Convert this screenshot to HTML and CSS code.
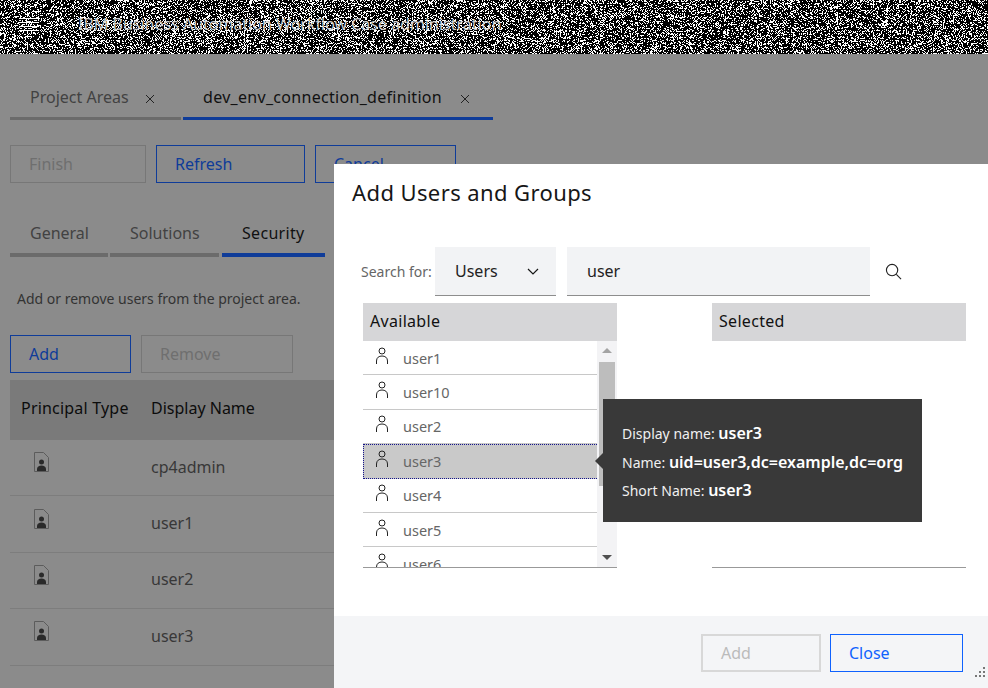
FILE: index.html
```html
<!DOCTYPE html>
<html lang="en">
<head>
    <meta charset="UTF-8">
    <meta name="viewport" content="width=device-width, initial-scale=1.0">
    <title>Add Users and Groups</title>
    <link rel="stylesheet" href="styles.css">
</head>
<body>
    <svg class="defs" width="0" height="0" aria-hidden="true">
        <defs>
            <filter id="dither" x="0" y="0" width="100%" height="100%">
                <feTurbulence type="fractalNoise" baseFrequency="2.3" numOctaves="2" seed="7"/>
                <feColorMatrix type="matrix" values="1 0 0 0 0  1 0 0 0 0  1 0 0 0 0  0 0 0 0 1"/>
                <feComponentTransfer>
                    <feFuncR type="discrete" tableValues="0 0 0 0 0 1 1 1 1"/>
                    <feFuncG type="discrete" tableValues="0 0 0 0 0 1 1 1 1"/>
                    <feFuncB type="discrete" tableValues="0 0 0 0 0 1 1 1 1"/>
                </feComponentTransfer>
            </filter>
            <symbol id="person" viewBox="0 0 14 18">
                <circle cx="7" cy="4" r="3" fill="none" stroke="currentColor"/>
                <path d="M1.500 17v-3C1.500 10.500 4 9 7 9s5.500 1.500 5.500 5v3" fill="none" stroke="currentColor"/>
            </symbol>
            <symbol id="badge" viewBox="0 0 15 20">
                <path d="M.5 19.500V.5h9l5 5v14z" fill="none" stroke="#5c5c5c"/>
                <circle cx="7.500" cy="10" r="2.500" fill="#2a2a2a"/>
                <path d="M3 19v-2c0-2 2-3.500 4.500-3.500S12 15 12 17v2z" fill="#2a2a2a"/>
            </symbol>
            <symbol id="cross" viewBox="0 0 10 10">
                <path d="M1 1l8 8M9 1l-8 8" fill="none" stroke="currentColor"/>
            </symbol>
        </defs>
    </svg>

    <div class="screen">
        <header class="masthead">
            <svg class="noise masthead-noise" aria-hidden="true"><rect width="100%" height="100%" filter="url(#dither)"/></svg>
            <span class="menu-icon"><i></i><i></i><i></i><i></i></span>
            <span class="product">IBM Business Automation Workflow Case administration</span>
        </header>

        <main class="page">
            <div class="tabs tabs-top">
                <div class="tab tab-areas">Project Areas <svg class="tab-close"><use href="#cross"/></svg></div>
                <div class="tab tab-conn is-active">dev_env_connection_definition <svg class="tab-close"><use href="#cross"/></svg></div>
            </div>

            <div class="actions actions-top">
                <button class="btn btn-finish is-disabled">Finish</button>
                <button class="btn btn-refresh">Refresh</button>
                <button class="btn btn-cancel">Cancel</button>
            </div>

            <div class="tabs tabs-sub">
                <div class="tab tab-general">General</div>
                <div class="tab tab-solutions">Solutions</div>
                <div class="tab tab-security is-active">Security</div>
            </div>

            <p class="hint">Add or remove users from the project area.</p>

            <div class="actions actions-users">
                <button class="btn btn-add">Add</button>
                <button class="btn btn-remove is-disabled">Remove</button>
            </div>

            <div class="grid-head">
                <span class="col-type">Principal Type</span>
                <span>Display Name</span>
            </div>
            <div class="grid-row"><span class="col-type"><svg class="badge"><use href="#badge"/></svg></span><span>cp4admin</span></div>
            <div class="grid-row"><span class="col-type"><svg class="badge"><use href="#badge"/></svg></span><span>user1</span></div>
            <div class="grid-row"><span class="col-type"><svg class="badge"><use href="#badge"/></svg></span><span>user2</span></div>
            <div class="grid-row"><span class="col-type"><svg class="badge"><use href="#badge"/></svg></span><span>user3</span></div>
        </main>

        <section class="dialog">
            <h2 class="dialog-title">Add Users and Groups</h2>

            <div class="dialog-body">
                <div class="search-bar">
                    <label class="search-label">Search for:</label>
                    <div class="field field-select">
                        <span>Users</span>
                        <svg class="chevron" viewBox="0 0 12 7"><path d="M1 1l5 5 5-5" fill="none" stroke="#161616" stroke-width="1.200"/></svg>
                    </div>
                    <div class="field field-input">user</div>
                    <svg class="search-icon" viewBox="0 0 18 18"><circle cx="7.500" cy="7.500" r="6" fill="none" stroke="#222" stroke-width="1.200"/><path d="M12 12l5 5" stroke="#222" stroke-width="1.200"/></svg>
                </div>

                <div class="pickers">
                    <div class="picker">
                        <div class="picker-head">Available</div>
                        <div class="picker-list">
                            <ul class="users">
                                <li><svg class="person"><use href="#person"/></svg>user1</li>
                                <li><svg class="person"><use href="#person"/></svg>user10</li>
                                <li><svg class="person"><use href="#person"/></svg>user2</li>
                                <li class="is-focused"><svg class="person"><use href="#person"/></svg>user3</li>
                                <li><svg class="person"><use href="#person"/></svg>user4</li>
                                <li><svg class="person"><use href="#person"/></svg>user5</li>
                                <li><svg class="person"><use href="#person"/></svg>user6</li>
                            </ul>
                            <div class="scrollbar">
                                <span class="arrow arrow-up"></span>
                                <span class="thumb"></span>
                                <span class="arrow arrow-down"></span>
                            </div>
                        </div>
                    </div>
                    <div class="picker">
                        <div class="picker-head">Selected</div>
                        <div class="picker-list"></div>
                    </div>
                </div>
            </div>

            <footer class="dialog-foot">
                <button class="btn btn-foot-add is-muted">Add</button>
                <button class="btn btn-close">Close</button>
            </footer>

            <div class="tooltip">
                <p>Display name: <b>user3</b></p>
                <p>Name: <b>uid=user3,dc=example,dc=org</b></p>
                <p>Short Name: <b>user3</b></p>
            </div>

            <span class="grip"><i></i><i></i><i></i><i></i><i></i><i></i></span>
        </section>
    </div>
</body>
</html>
```

FILE: styles.css
```css
* {
    box-sizing: border-box;
}

body {
    margin: 0;
    font-family: "Noto Sans", Arial, sans-serif;
    background-color: #8b8b8b;
}

.defs {
    position: absolute;
}

.screen {
    position: relative;
    width: 988px;
    height: 688px;
    overflow: hidden;
    background-color: #8b8b8b;
}

.noise {
    position: absolute;
    top: 0;
    left: 0;
    width: 100%;
    height: 100%;
}

/* masthead */
.masthead {
    position: relative;
    display: flex;
    align-items: center;
    height: 54px;
    padding: 0 0 6px 19px;
    background: #000;
    overflow: hidden;
}

.menu-icon {
    position: relative;
    display: flex;
    flex-direction: column;
    gap: 3px;
    width: 20px;
    margin-right: 39px;
}

.menu-icon i {
    display: block;
    height: 1px;
    background: #fff;
}

.product {
    position: relative;
    font-size: 16px;
    color: #cfcfcf;
    white-space: nowrap;
}

/* left page */
.page {
    padding: 29px 0 0 10px;
}

.tabs {
    display: flex;
    gap: 2px;
}

.tab {
    padding-left: 20px;
    font-size: 16px;
    line-height: 22px;
    color: #424242;
    border-bottom: 3px solid #6b6b6b;
}

.tab.is-active {
    color: #111;
    letter-spacing: 0.3px;
    border-bottom-color: #0f3c99;
}

.tabs-top .tab {
    height: 37px;
    padding-top: 3px;
}

.tab-areas {
    width: 171px;
}

.tab-conn {
    width: 310px;
}

.tab-close {
    width: 10px;
    height: 10px;
    margin-left: 12px;
    color: #222;
    vertical-align: -1px;
}

.tab-conn .tab-close {
    margin-left: 14px;
}

.actions {
    display: flex;
    gap: 10px;
}

.actions-top {
    margin-top: 25px;
}

.btn {
    height: 38px;
    padding: 0 0 0 18px;
    background: transparent;
    border: 1px solid #0f3c99;
    font-family: inherit;
    font-size: 16px;
    text-align: left;
    color: #0f3c99;
}

.btn.is-disabled {
    border-color: #777;
    color: #6f6f6f;
}

.btn-finish { width: 136px; }
.btn-refresh { width: 149px; }
.btn-cancel { width: 141px; }
.btn-add { width: 121px; }
.btn-remove { width: 152px; }

.tabs-sub {
    margin-top: 36px;
}

.tabs-sub .tab {
    height: 38px;
    padding-top: 3px;
    border-bottom-width: 4px;
}

.tab-general { width: 98px; }
.tab-solutions { width: 109px; margin-right: 1px; }
.tab-security { width: 103px; }

.hint {
    margin: 32px 0 0 7px;
    font-size: 14px;
    line-height: 20px;
    color: #333;
}

.actions-users {
    margin-top: 26px;
}

.grid-head,
.grid-row {
    display: flex;
    align-items: center;
    padding-left: 11px;
}

.grid-head {
    height: 60px;
    margin-top: 7px;
    padding-bottom: 4px;
    background: #7a7a7a;
    font-size: 16px;
    color: #0c0c0c;
}

.grid-row {
    height: 56.400px;
    padding-bottom: 2px;
    font-size: 16px;
    color: #383838;
    border-bottom: 1px solid #7d7d7d;
}

.col-type {
    width: 130px;
    flex: none;
}

.grid-head .col-type {
    letter-spacing: 0.2px;
}

.badge {
    display: block;
    width: 15px;
    height: 20px;
    margin: 0 0 9px 13px;
}

/* dialog */
.dialog {
    position: absolute;
    top: 164px;
    left: 334px;
    right: 0;
    bottom: 0;
    display: flex;
    flex-direction: column;
    background: #fff;
}

.dialog-title {
    margin: 14px 0 0 18px;
    font-size: 22px;
    line-height: 28px;
    font-weight: 400;
    letter-spacing: 0.4px;
    color: #161616;
}

.dialog-body {
    flex: 1;
    padding: 41px 22px 0 27px;
}

.search-bar {
    display: flex;
    align-items: center;
    height: 49px;
}

.search-label {
    width: 74px;
    font-size: 14px;
    color: #666;
}

.field {
    display: flex;
    align-items: center;
    justify-content: space-between;
    height: 49px;
    padding-left: 20px;
    background: #f2f3f5;
    border-bottom: 1px solid #8d8d8d;
    font-size: 16px;
    color: #222;
}

.field-select {
    width: 121px;
    padding-right: 17px;
    margin-right: 11px;
}

.field-input {
    width: 303px;
    margin-right: 15px;
}

.chevron {
    width: 12px;
    height: 7px;
}

.search-icon {
    width: 17px;
    height: 17px;
}

.pickers {
    display: flex;
    justify-content: space-between;
    margin: 7px 0 0 2px;
}

.picker {
    width: 254px;
}

.picker-head {
    height: 38px;
    padding: 0 0 0 7px;
    background: #d6d6d8;
    font-size: 16px;
    letter-spacing: 0.3px;
    line-height: 37px;
    color: #111;
}

.picker-list {
    display: flex;
    height: 227px;
    overflow: hidden;
    border-bottom: 1px solid #999;
}

.users {
    flex: 1;
    margin: 0;
    padding: 0;
    list-style: none;
}

.users li {
    display: flex;
    align-items: center;
    height: 34.400px;
    padding-left: 12px;
    border-bottom: 1px solid #c8c8c8;
    font-size: 14.500px;
    color: #666;
}

.users li.is-focused {
    background: #c9c9c9;
    border: 1px dotted #14148c;
    border-right: 0;
    padding-left: 11px;
}

.person {
    width: 14px;
    height: 18px;
    margin: 0 14px 4px 0;
    color: #222;
}

.scrollbar {
    position: relative;
    width: 20px;
    flex: none;
    background: #f3f3f5;
}

.thumb {
    position: absolute;
    top: 21px;
    left: 2px;
    width: 16px;
    height: 124px;
    background: #bdbdbd;
}

.arrow {
    position: absolute;
    left: 5px;
    border-left: 5px solid transparent;
    border-right: 5px solid transparent;
}

.arrow-up {
    top: 7px;
    border-bottom: 5px solid #a3a3a3;
}

.arrow-down {
    bottom: 7px;
    border-top: 5px solid #505050;
}

.dialog-foot {
    display: flex;
    justify-content: flex-end;
    gap: 9px;
    height: 72px;
    padding: 18px 25px 0 0;
    background: #f4f5f7;
}

.btn-foot-add {
    width: 120px;
}

.btn.is-muted {
    border: 2px solid #d8d8d8;
    color: #bbb;
}

.btn-close {
    width: 133px;
    border-color: #0f62fe;
    color: #0f62fe;
}

.tooltip {
    position: absolute;
    top: 235px;
    left: 269px;
    width: 319px;
    height: 123px;
    padding: 20px 0 0 19px;
    background: #393939;
    color: #f0f0f0;
    font-size: 14px;
}

.tooltip::before {
    content: "";
    position: absolute;
    top: 54px;
    left: -8px;
    border-top: 8px solid transparent;
    border-bottom: 8px solid transparent;
    border-right: 8px solid #393939;
}

.tooltip p {
    height: 28.500px;
    margin: 0;
    line-height: 28px;
    white-space: nowrap;
}

.tooltip b {
    font-size: 16px;
    font-weight: 600;
    color: #fff;
}

.grip {
    position: absolute;
    right: 3px;
    bottom: 11px;
    display: grid;
    grid-template-columns: repeat(3, 2px);
    grid-template-rows: repeat(3, 2px);
    gap: 2px;
}

.grip i {
    width: 2px;
    height: 2px;
    background: #777;
}

.grip i:nth-child(1) {
    grid-column: 3;
    grid-row: 1;
}

.grip i:nth-child(2) {
    grid-column: 2;
    grid-row: 2;
}

.grip i:nth-child(3) {
    grid-column: 3;
    grid-row: 2;
}

.grip i:nth-child(4) {
    grid-column: 1;
    grid-row: 3;
}

.grip i:nth-child(5) {
    grid-column: 2;
    grid-row: 3;
}

.grip i:nth-child(6) {
    grid-column: 3;
    grid-row: 3;
}
```
